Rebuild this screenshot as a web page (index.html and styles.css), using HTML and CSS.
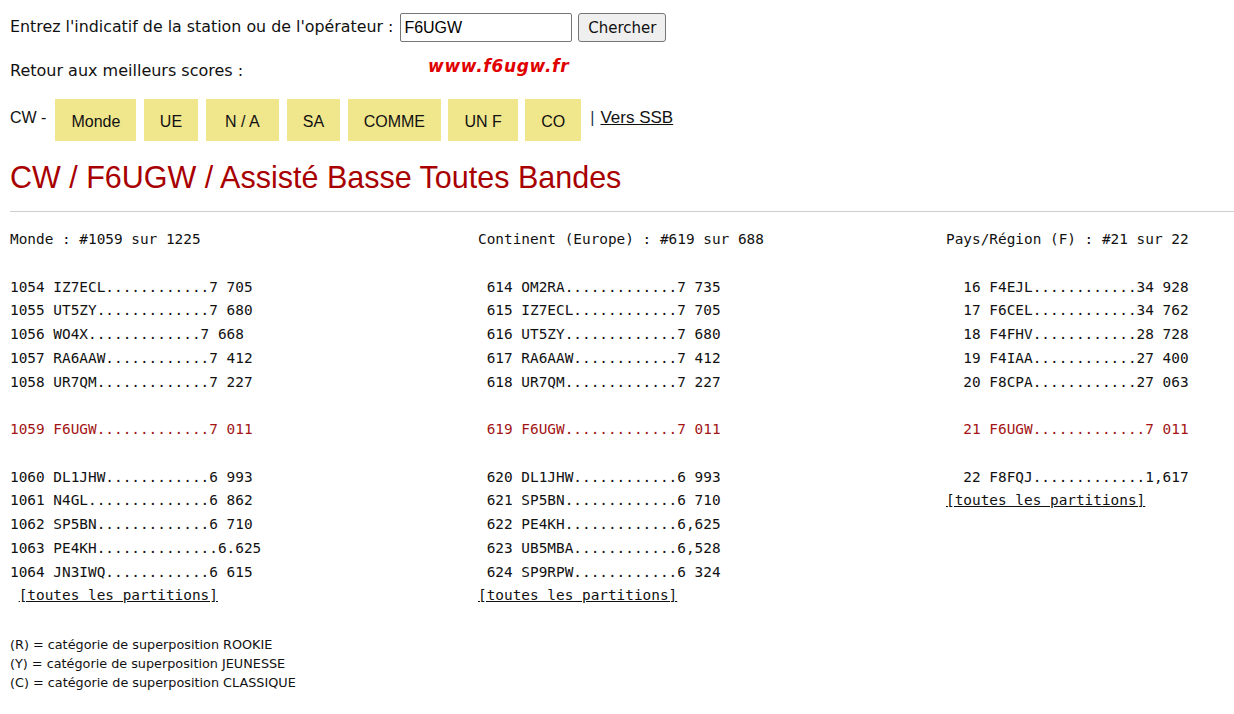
FILE: index.html
```html
<!DOCTYPE html>
<html lang="fr">
<head>
<meta charset="utf-8">
<title>CW / F6UGW</title>
<link rel="stylesheet" href="styles.css">
</head>
<body>
<div class="page">
  <form class="search">
    <label class="search-label" for="call">Entrez l'indicatif de la station ou de l'opérateur :</label>
    <input class="search-input" id="call" type="text" value="F6UGW">
    <button class="search-btn" type="button">Chercher</button>
  </form>
  <div class="back">Retour aux meilleurs scores :</div>
  <div class="watermark">www.f6ugw.fr</div>
  <nav class="nav">
    <span class="nav-mode">CW -</span>
    <a class="nav-btn">Monde</a>
    <a class="nav-btn">UE</a>
    <a class="nav-btn nav-btn-wide">N / A</a>
    <a class="nav-btn">SA</a>
    <a class="nav-btn">COMME</a>
    <a class="nav-btn">UN F</a>
    <a class="nav-btn">CO</a>
    <span class="nav-sep">|</span>
    <a class="nav-link" href="#">Vers SSB</a>
  </nav>
  <h1 class="title">CW / F6UGW / Assisté Basse Toutes Bandes</h1>
  <hr class="rule">
  <div class="cols">
    <div class="col">
      <div class="ln">Monde : #1059 sur 1225</div>
      <div class="ln"> </div>
      <div class="ln">1054 IZ7ECL............7 705</div>
      <div class="ln">1055 UT5ZY.............7 680</div>
      <div class="ln">1056 WO4X.............7 668</div>
      <div class="ln">1057 RA6AAW............7 412</div>
      <div class="ln">1058 UR7QM.............7 227</div>
      <div class="ln"> </div>
      <div class="ln me">1059 F6UGW.............7 011</div>
      <div class="ln"> </div>
      <div class="ln">1060 DL1JHW............6 993</div>
      <div class="ln">1061 N4GL..............6 862</div>
      <div class="ln">1062 SP5BN.............6 710</div>
      <div class="ln">1063 PE4KH..............6.625</div>
      <div class="ln">1064 JN3IWQ............6 615</div>
      <div class="ln"> <a class="all" href="#">[toutes les partitions]</a></div>
    </div>
    <div class="col">
      <div class="ln">Continent (Europe) : #619 sur 688</div>
      <div class="ln"> </div>
      <div class="ln"> 614 OM2RA.............7 735</div>
      <div class="ln"> 615 IZ7ECL............7 705</div>
      <div class="ln"> 616 UT5ZY.............7 680</div>
      <div class="ln"> 617 RA6AAW............7 412</div>
      <div class="ln"> 618 UR7QM.............7 227</div>
      <div class="ln"> </div>
      <div class="ln me"> 619 F6UGW.............7 011</div>
      <div class="ln"> </div>
      <div class="ln"> 620 DL1JHW............6 993</div>
      <div class="ln"> 621 SP5BN.............6 710</div>
      <div class="ln"> 622 PE4KH.............6,625</div>
      <div class="ln"> 623 UB5MBA............6,528</div>
      <div class="ln"> 624 SP9RPW............6 324</div>
      <div class="ln"><a class="all" href="#">[toutes les partitions]</a></div>
    </div>
    <div class="col">
      <div class="ln">Pays/Région (F) : #21 sur 22</div>
      <div class="ln"> </div>
      <div class="ln">  16 F4EJL............34 928</div>
      <div class="ln">  17 F6CEL............34 762</div>
      <div class="ln">  18 F4FHV............28 728</div>
      <div class="ln">  19 F4IAA............27 400</div>
      <div class="ln">  20 F8CPA............27 063</div>
      <div class="ln"> </div>
      <div class="ln me">  21 F6UGW.............7 011</div>
      <div class="ln"> </div>
      <div class="ln">  22 F8FQJ.............1,617</div>
      <div class="ln"><a class="all" href="#">[toutes les partitions]</a></div>
    </div>
  </div>
  <div class="legend">
    <div>(R) = catégorie de superposition ROOKIE</div>
    <div>(Y) = catégorie de superposition JEUNESSE</div>
    <div>(C) = catégorie de superposition CLASSIQUE</div>
  </div>
</div>
</body>
</html>
```
FILE: styles.css
```css
html, body {
  margin: 0;
  padding: 0;
  background: #ffffff;
}
body {
  font-family: "Liberation Sans", Arial, sans-serif;
  font-size: 16px;
  color: #111;
}
.page {
  position: relative;
  padding: 0 0 0 10px;
}
.search {
  display: flex;
  align-items: center;
  margin: 13px 0 0 0;
  height: 29px;
}
.search-label {
  font-family: "DejaVu Sans", Verdana, sans-serif;
  font-size: 15.85px;
  margin-right: 7px;
  position: relative;
  top: -1px;
}
.search-input {
  box-sizing: border-box;
  width: 172px;
  height: 29px;
  border: 1px solid #767676;
  border-radius: 2px;
  padding: 0 3px;
  font-family: "Liberation Sans", Arial, sans-serif;
  font-size: 16px;
  color: #000;
  margin: 0 6px 0 0;
}
.search-btn {
  box-sizing: border-box;
  width: 88px;
  height: 29px;
  background: #efefef;
  border: 1px solid #767676;
  border-radius: 3px;
  font-family: "DejaVu Sans", Verdana, sans-serif;
  font-size: 15px;
  color: #111;
  padding: 0;
}
.back {
  margin-top: 17px;
  line-height: 24px;
  font-family: "DejaVu Sans", Verdana, sans-serif;
  font-size: 16px;
}
.watermark {
  position: absolute;
  left: 428px;
  top: 43px;
  font-family: "DejaVu Sans", sans-serif;
  font-weight: bold;
  font-style: italic;
  font-size: 17px;
  color: #e00000;
  letter-spacing: 0.7px;
}
.nav {
  display: flex;
  align-items: center;
  margin-top: 16px;
  height: 42px;
}
.nav-mode {
  margin-right: 9px;
  position: relative;
  top: -2px;
}
.nav-btn {
  display: flex;
  align-items: center;
  justify-content: center;
  box-sizing: border-box;
  height: 42px;
  padding: 4px 16px 0;
  background: #f0e68c;
  color: #111;
  margin-right: 7.5px;
}
.nav-btn-wide {
  padding: 4px 19.5px 0;
}
.nav-sep {
  margin-left: 1.5px;
  color: #1c3553;
  position: relative;
  top: -2px;
}
.nav-link {
  margin-left: 6px;
  font-size: 17px;
  color: #111;
  text-decoration: underline;
  position: relative;
  top: -2px;
}
.title {
  margin: 16px 0 0;
  font-size: 30.5px;
  line-height: 40px;
  font-weight: normal;
  color: #a80000;
}
.rule {
  margin: 14px 0 0;
  height: 0;
  border: 0;
  border-top: 1px solid #cfcfcf;
}
.cols {
  display: grid;
  grid-template-columns: 468px 468px 1fr;
  margin-top: 16px;
  font-family: "DejaVu Sans Mono", monospace;
  font-size: 14.4px;
  color: #111;
}
.ln {
  white-space: pre;
  height: 23.75px;
  line-height: 23.75px;
}
.me {
  color: #a31515;
}
.all {
  color: #111;
  text-decoration: underline;
}
.legend {
  margin-top: 27px;
  font-family: "DejaVu Sans", Verdana, sans-serif;
  font-size: 12.8px;
  line-height: 19px;
  color: #111;
}
```
